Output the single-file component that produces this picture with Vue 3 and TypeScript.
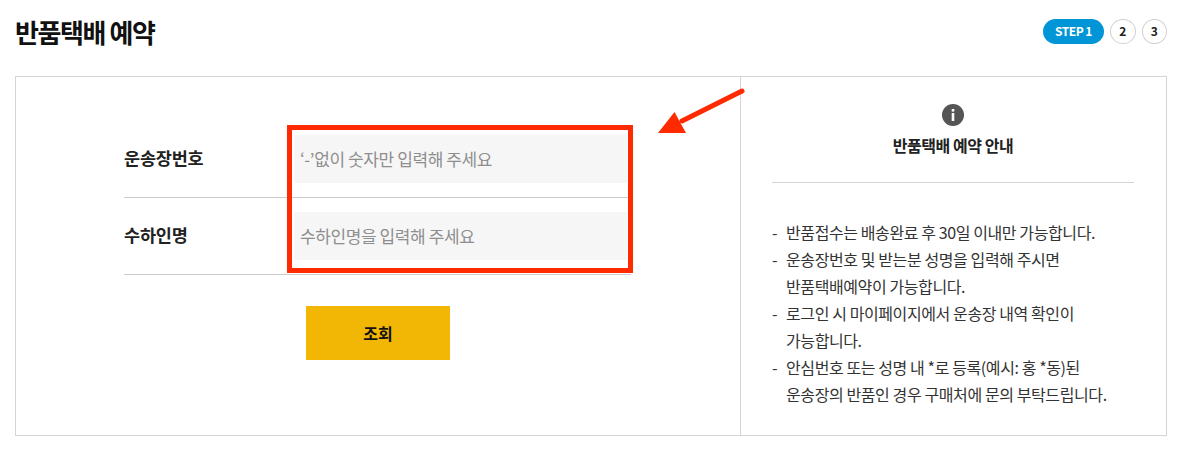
<script setup lang="ts">
const fields = [
  { label: '운송장번호', placeholder: '‘-’없이 숫자만 입력해 주세요' },
  { label: '수하인명', placeholder: '수하인명을 입력해 주세요' },
]
const notes = [
  ['반품접수는 배송완료 후 30일 이내만 가능합니다.'],
  ['운송장번호 및 받는분 성명을 입력해 주시면', '반품택배예약이 가능합니다.'],
  ['로그인 시 마이페이지에서 운송장 내역 확인이', '가능합니다.'],
  ['안심번호 또는 성명 내 *로 등록(예시: 홍 *동)된', '운송장의 반품인 경우 구매처에 문의 부탁드립니다.'],
]
</script>

<template>
  <div class="page">
    <header class="head">
      <h1 class="title">반품택배 예약</h1>
      <div class="steps">
        <span class="pill">STEP 1</span>
        <span class="dot">2</span>
        <span class="dot">3</span>
      </div>
    </header>
    <section class="card">
      <div class="left">
        <form class="form" @submit.prevent>
          <div v-for="f in fields" :key="f.label" class="row">
            <label class="label">{{ f.label }}</label>
            <input class="input" type="text" :placeholder="f.placeholder" />
          </div>
        </form>
        <button class="submit" type="button">조회</button>
      </div>
      <aside class="right">
        <svg class="info" width="22" height="22" viewBox="0 0 22 22">
          <circle cx="11" cy="11" r="11" fill="#555" />
          <rect x="9.7" y="5" width="2.6" height="2.6" fill="#fff" />
          <rect x="9.7" y="9" width="2.6" height="8" fill="#fff" />
        </svg>
        <h2 class="subtitle">반품택배 예약 안내</h2>
        <hr class="rule" />
        <ul class="notes">
          <li v-for="(n, i) in notes" :key="i" class="note">
            <span v-for="l in n" :key="l" class="line">{{ l }}</span>
          </li>
        </ul>
      </aside>
    </section>
    <div class="redbox"></div>
    <svg class="arrow" width="90" height="50" viewBox="0 0 90 50">
      <line x1="84" y1="3" x2="24" y2="33" stroke="#ff2a00" stroke-width="5" stroke-linecap="round" />
      <polygon points="0,45 28,45 16.500,24" fill="#ff2a00" />
    </svg>
  </div>
</template>

<style scoped>
.page {
  position: relative;
  width: 1183px;
  height: 452px;
  box-sizing: border-box;
  padding: 0 16px 0 15px;
  font-family: "Noto Sans CJK KR", "Noto Sans", sans-serif;
  color: #222;
  background: #fff;
}
.head {
  height: 76px;
  display: flex;
  justify-content: space-between;
  align-items: flex-start;
}
.title {
  margin: 15px 0 0;
  font-size: 26px;
  line-height: 34px;
  font-weight: 700;
  letter-spacing: -1.4px;
  color: #111;
}
.steps {
  display: flex;
  gap: 6px;
  margin-top: 19px;
}
.pill {
  width: 61px;
  height: 25px;
  border-radius: 13px;
  background: #0095d6;
  color: #fff;
  font-size: 12px;
  font-weight: 700;
  line-height: 24px;
  text-align: center;
  letter-spacing: -0.5px;
}
.dot {
  width: 25.5px;
  height: 25px;
  box-sizing: border-box;
  border: 1px solid #d0d0d0;
  border-radius: 50%;
  font-size: 12px;
  font-weight: 700;
  line-height: 22px;
  text-align: center;
  color: #222;
}
.card {
  display: flex;
  width: 1152px;
  height: 360px;
  box-sizing: border-box;
  border: 1px solid #d5d5d5;
}
.left {
  width: 725px;
  box-sizing: border-box;
  border-right: 1px solid #d5d5d5;
  padding: 44px 0 0 108px;
}
.form {
  width: 507px;
}
.row {
  display: flex;
  align-items: center;
  height: 77px;
  box-sizing: border-box;
  border-bottom: 1px solid #ccc;
}
.label {
  width: 170px;
  padding-bottom: 4px;
  font-size: 17.5px;
  font-weight: 700;
  letter-spacing: -0.2px;
  color: #222;
}
.input {
  width: 333px;
  height: 48px;
  box-sizing: border-box;
  border: 0;
  outline: 0;
  padding: 0 5px 2px 6px;
  background: #f6f6f6;
  font: inherit;
  font-size: 17px;
  letter-spacing: -0.4px;
}
.input::placeholder {
  color: #8e8e8e;
  opacity: 1;
}
.submit {
  display: block;
  width: 144px;
  height: 54px;
  margin: 31px 0 0 182px;
  border: 0;
  background: #f2b705;
  color: #111;
  font: inherit;
  font-size: 16px;
  font-weight: 700;
  padding-bottom: 2px;
}
.right {
  flex: 1;
  padding: 27px 32px 0 31px;
  display: flex;
  flex-direction: column;
  align-items: stretch;
}
.info {
  align-self: center;
  display: block;
}
.subtitle {
  margin: 8px 0 0;
  font-size: 16px;
  line-height: 22px;
  font-weight: 700;
  text-align: center;
  letter-spacing: -0.45px;
  color: #222;
}
.rule {
  width: 100%;
  margin: 26px 0 0;
  border: 0;
  border-top: 1px solid #d5d5d5;
}
.notes {
  list-style: none;
  margin: 36px 0 0;
  padding: 0;
  font-size: 16px;
  line-height: 27px;
  letter-spacing: -0.4px;
  color: #333;
}
.note {
  position: relative;
  padding-left: 14px;
}
.note::before {
  content: "-";
  position: absolute;
  left: 0;
  top: 0;
}
.line {
  display: block;
  white-space: nowrap;
}
.redbox {
  position: absolute;
  left: 287px;
  top: 125px;
  width: 346px;
  height: 148px;
  box-sizing: border-box;
  border: 5px solid #ff2a00;
  pointer-events: none;
}
.arrow {
  position: absolute;
  left: 658px;
  top: 88px;
  pointer-events: none;
}
</style>
